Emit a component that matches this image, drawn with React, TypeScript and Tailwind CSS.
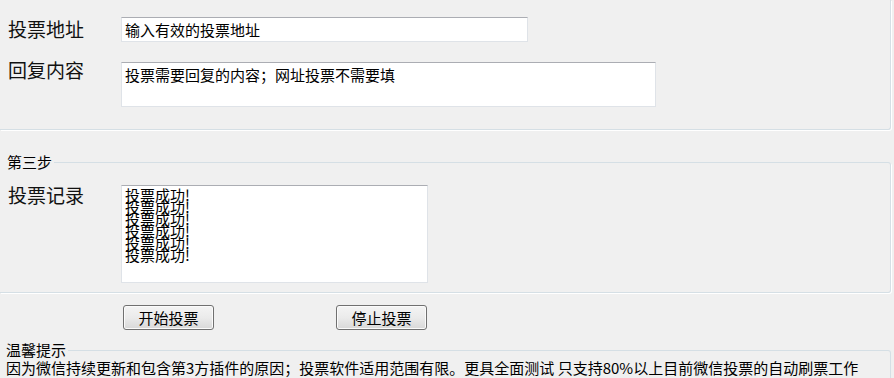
const logLines = ['投票成功!', '投票成功!', '投票成功!', '投票成功!', '投票成功!', '投票成功!'];

function TextBox({ className, children }: { className: string; children?: React.ReactNode }) {
  return (
    <div
      className={`border border-[#dfe3e8] border-t-[#abadb3] bg-white text-[15px] text-black ${className}`}
    >
      {children}
    </div>
  );
}

function Button({ children }: { children: React.ReactNode }) {
  return (
    <button className="h-[25px] w-[91px] rounded-[3px] border border-[#707070] bg-linear-to-b from-[#f4f4f4] via-[#ebebeb] to-[#d8d8d8] text-[15px] leading-[23px] text-black shadow-[inset_0_0_0_1px_#fbfbfb]">
      {children}
    </button>
  );
}

export default function App() {
  return (
    <div className="h-[378px] w-[894px] overflow-hidden bg-[#f0f0f0] font-['Noto_Sans_CJK_SC',sans-serif] text-black">
      {/* step two, top cut off */}
      <div className="h-[130px] w-[891px] rounded-br-[3px] border-r border-b border-[#d5dfe5] pt-[17px] pl-2 shadow-[1px_1px_0_#fff]">
        <div className="grid grid-cols-[113px_auto] items-start gap-y-[20px]">
          <div className="-mt-[1px] text-[19px] leading-[25px] text-[#111]">投票地址</div>
          <TextBox className="h-[25px] w-[407px] pl-[3px] leading-[23px]">输入有效的投票地址</TextBox>
          <div className="-mt-[2px] text-[19px] leading-[19px] text-[#111]">回复内容</div>
          <TextBox className="h-[45px] w-[535px] pt-[3px] pl-[3px] leading-[17px]">
            投票需要回复的内容；网址投票不需要填
          </TextBox>
        </div>
      </div>

      <fieldset className="mt-[24px] w-[891px] rounded-r-[3px] border border-l-0 border-[#d5dfe5] pb-[9px] shadow-[1px_1px_0_#fff]">
        <legend className="pr-[2px] pl-[7px] text-[15px] leading-[16px]">第三步</legend>
        <div className="mt-[15px] grid grid-cols-[113px_auto] items-start pl-2">
          <div className="text-[19px] leading-[19px] text-[#111]">投票记录</div>
          <TextBox className="h-[98px] w-[307px] pt-[3px] pl-[3px] leading-[12px]">
            {logLines.map((line, i) => (
              <div key={i}>{line}</div>
            ))}
          </TextBox>
        </div>
      </fieldset>

      <div className="mt-[12px] ml-[121px] flex w-[307px] justify-between pr-[1px] pl-[2px]">
        <Button>开始投票</Button>
        <Button>停止投票</Button>
      </div>

      <fieldset className="mt-[12px] h-[80px] w-[891px] rounded-tr-[3px] border border-l-0 border-[#d5dfe5]">
        <legend className="pr-[2px] pl-[6px] text-[15px] leading-[16px]">温馨提示</legend>
        <div className="mt-[1px] pl-[6px] text-[15px] leading-[17px] whitespace-nowrap">
          因为微信持续更新和包含第3方插件的原因；投票软件适用范围有限。更具全面测试 只支持80%以上目前微信投票的自动刷票工作
        </div>
      </fieldset>
    </div>
  );
}
